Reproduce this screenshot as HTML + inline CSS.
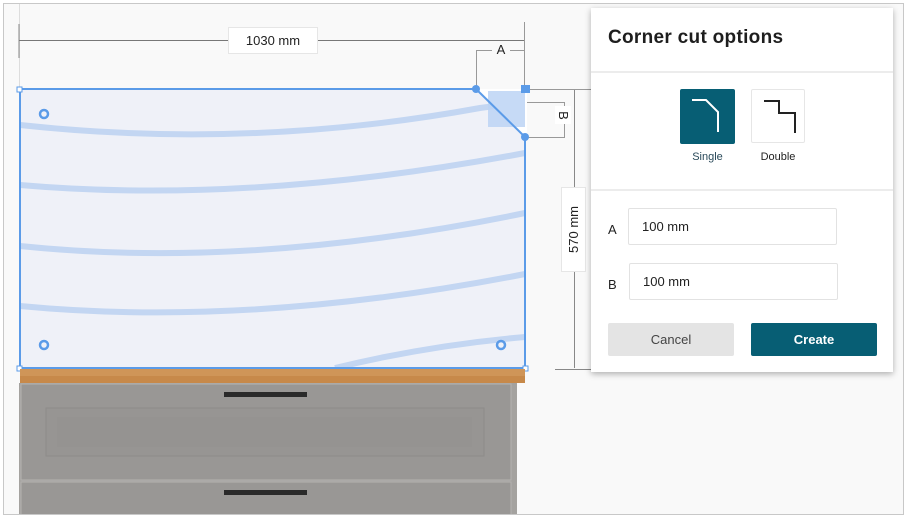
<!DOCTYPE html>
<html><head><style>
*{margin:0;padding:0;box-sizing:border-box}
body{width:907px;height:520px;background:#fff;font-family:"Liberation Sans",sans-serif;position:relative;overflow:hidden}
.a{position:absolute}
.frame{left:3px;top:3px;width:901px;height:512px;border:1px solid #c8c8c8;background:#f9f9f9;overflow:hidden}
.lbl{background:#fff;border:1px solid #e6e6e6;font-size:13px;color:#222;display:flex;align-items:center;justify-content:center}
.panel{left:591px;top:8px;width:302px;height:364px;background:#fff;box-shadow:0 2px 6px rgba(0,0,0,.3)}
.inp{background:#fff;border:1px solid #e2e2e2;border-radius:2px;font-size:13px;color:#222;padding-left:13px;display:flex;align-items:center}
</style></head><body>
<div class="a frame"></div>
<svg class="a" style="left:0;top:0" width="907" height="520">
<line x1="19.5" y1="4" x2="19.5" y2="90" stroke="#ddd"/>
<line x1="19" y1="24" x2="19" y2="58" stroke="#888"/>
<line x1="19" y1="40.5" x2="525" y2="40.5" stroke="#777"/>
<line x1="524.5" y1="22" x2="524.5" y2="90" stroke="#999"/>
<polyline points="476.5,90 476.5,50.5 524,50.5" fill="none" stroke="#999"/>
<polyline points="525,102.5 564.5,102.5 564.5,137.5 525,137.5" fill="none" stroke="#999"/>
<line x1="525" y1="89.5" x2="591" y2="89.5" stroke="#999"/>
<line x1="574.5" y1="90" x2="574.5" y2="368" stroke="#888"/>
<line x1="555" y1="369.5" x2="591" y2="369.5" stroke="#888"/>
<rect x="20" y="90" width="505" height="278" fill="#eff1f8"/>
<g stroke="#c3d6f2" stroke-width="6" fill="none">
<path d="M20 125 Q250 150 480 108 L525 102"/>
<path d="M20 185 Q250 205 525 153"/>
<path d="M20 246 Q250 270 525 213"/>
<path d="M20 306 Q250 328 525 274"/>
<path d="M335 368 Q430 345 525 337"/>
</g>
<polygon points="476,89 527,89 527,137" fill="#fff"/>
<rect x="488" y="91" width="37" height="36" fill="#bcd4f5" opacity=".85"/>
<path d="M20 89 H476 L525 137 V368 H20 Z" fill="none" stroke="#5b9be8" stroke-width="2"/>
<circle cx="476" cy="89" r="4" fill="#5b9be8"/>
<circle cx="525" cy="137" r="4" fill="#5b9be8"/>
<rect x="521" y="85" width="9" height="8" fill="#5b9be8"/>
<rect x="17" y="87" width="5" height="5" fill="#fff" stroke="#5b9be8"/>
<rect x="17" y="366" width="5" height="5" fill="#fff" stroke="#5b9be8"/>
<rect x="523" y="366" width="5" height="5" fill="#fff" stroke="#5b9be8"/>
<g fill="none" stroke="#5b9be8" stroke-width="2.5"><circle cx="44" cy="114" r="4"/><circle cx="44" cy="345" r="4"/><circle cx="501" cy="345" r="4"/></g>
<rect x="20" y="369" width="505" height="14" fill="#cf9558"/>
<rect x="20" y="376" width="505" height="7" fill="#c7894a"/>
<rect x="19" y="383" width="498" height="132" fill="#a4a29f"/>
<rect x="21" y="384" width="490" height="96" fill="#999795" stroke="#b5b3b0"/>
<rect x="46" y="408" width="438" height="48" fill="#979593" stroke="#8d8b89"/>
<rect x="57" y="417" width="415" height="30" fill="#959391"/>
<rect x="21" y="482" width="490" height="40" fill="#999795" stroke="#b5b3b0"/>
<rect x="224" y="392" width="83" height="5" fill="#2a2a2a"/>
<rect x="224" y="490" width="83" height="5" fill="#2a2a2a"/>
<rect x="0" y="515" width="907" height="5" fill="#fff"/>
<line x1="3" y1="514.5" x2="904" y2="514.5" stroke="#c8c8c8"/>
</svg>
<div class="a lbl" style="left:228px;top:27px;width:90px;height:27px">1030 mm</div>
<div class="a" style="left:492px;top:42px;width:18px;height:16px;background:#f9f9f9;font-size:13px;text-align:center;color:#222">A</div>
<div class="a" style="left:555px;top:106px;width:16px;height:18px;background:#fff;font-size:13px;color:#222;display:flex;align-items:center;justify-content:center"><span style="transform:rotate(90deg)">B</span></div>
<div class="a lbl" style="left:561px;top:187px;width:25px;height:85px"><span style="transform:rotate(-90deg);white-space:nowrap">570 mm</span></div>
<div class="a panel">
<div class="a" style="left:17px;top:19px;font-size:19px;font-weight:bold;color:#1e1e1e;letter-spacing:.3px">Corner cut options</div>
<div class="a" style="left:0;top:63px;width:302px;height:2px;background:#ececec"></div>
<div class="a" style="left:89px;top:81px;width:55px;height:55px;background:#075e74;border-radius:2px">
<svg width="55" height="55"><polyline points="12,11 26,11 38,23 38,43" fill="none" stroke="#fff" stroke-width="2"/></svg></div>
<div class="a" style="left:160px;top:81px;width:54px;height:54px;border:1px solid #e6e6e6;border-radius:2px">
<svg width="54" height="54"><polyline points="12,11 27,11 27,23 43,23 43,43" fill="none" stroke="#222" stroke-width="2"/></svg></div>
<div class="a" style="left:89px;top:143px;width:55px;text-align:center;font-size:11px;color:#2a4a5a">Single</div>
<div class="a" style="left:160px;top:143px;width:54px;text-align:center;font-size:11px;color:#222">Double</div>
<div class="a" style="left:0;top:181px;width:302px;height:2px;background:#ececec"></div>
<div class="a" style="left:17px;top:214px;font-size:13px;color:#222">A</div>
<div class="a inp" style="left:37px;top:200px;width:209px;height:37px">100 mm</div>
<div class="a" style="left:17px;top:269px;font-size:13px;color:#222">B</div>
<div class="a inp" style="left:38px;top:255px;width:209px;height:37px">100 mm</div>
<div class="a" style="left:17px;top:315px;width:126px;height:33px;background:#e4e4e4;border-radius:2px;font-size:13px;color:#444;display:flex;align-items:center;justify-content:center">Cancel</div>
<div class="a" style="left:160px;top:315px;width:126px;height:33px;background:#075e74;border-radius:2px;font-size:13px;font-weight:bold;color:#fff;display:flex;align-items:center;justify-content:center">Create</div>
</div>
</body></html>
